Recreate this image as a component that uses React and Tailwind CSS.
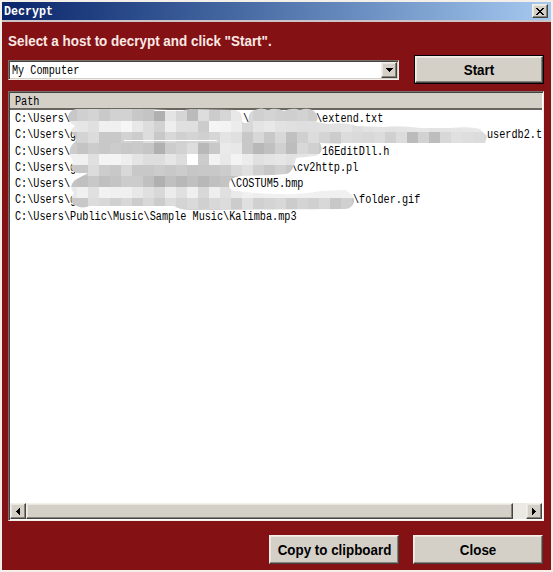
const MONO = "font-['Liberation_Mono','Noto_Sans_CJK_SC',monospace]";
const raised =
  'border border-t-[#f2efe9] border-l-[#f2efe9] border-r-[#45423f] border-b-[#45423f] shadow-[inset_-1px_-1px_0_#86837d,inset_1px_1px_0_#e9e6e0] bg-[#d4d0c8]';

// Fixed-pitch text, condensed to a six pixel cell.
function Mono({ children, className = '' }) {
  return (
    <span className={`inline-block origin-left scale-x-[0.85] whitespace-pre text-[12px] leading-4 text-black ${MONO} ${className}`}>
      {children}
    </span>
  );
}

const rows = [
  { path: 'C:\\Users\\', parts: [['left-[233px]', '\\'], ['left-[306px]', '\\extend.txt']] },
  { path: 'C:\\Users\\g', parts: [['left-[477px]', 'userdb2.txt']] },
  { path: 'C:\\Users\\', parts: [['left-[312px]', '16EditDll.h']] },
  { path: 'C:\\Users\\g', parts: [['left-[281px]', '\\cv2http.pl']] },
  { path: 'C:\\Users\\', parts: [['left-[220px]', '\\COSTUM5.bmp']] },
  { path: 'C:\\Users\\g', parts: [['left-[343px]', '\\folder.gif']] },
  { path: 'C:\\Users\\Public\\Music\\Sample Music\\Kalimba.mp3', parts: [] },
];

// Grey level of each redaction tile, two hex digits per tile.
const tiles = [
  'c8d0d4c9d2d2c8c4b0e4d5bbddccd6e8d8d0d4d0cfd2cdd0d0',
  'e8e6e0f0f0f6e8ddd2eee0dfccf5f3ecd8e4e8e2e0dedfe0e2e5dee2e4e2e4e6e6e3e4e5e6e8e8',
  'c8d4dcc8c8d2ccddc8d8d0d4d0d6e4e0c8d8c8d8c0d0dcd4ccdcdad8dcd0dcbbd2bdd8e0dedcd8',
  'ccc4ccc8ccc8cac6b0ccd2ddb8c8eae8c8b8c0d0bdd8d0c8d0',
  'f0f0e0f4f4eee4dddde6ddffccf2e8f3ece0e4e6e2e4e8e4e2',
  'c8c8dcccc8d8c8c8ccc8ccc6c8c8ccd8e0d0c8d0c8c8d0c8cc',
  'c4c0c8c0c4ccccc0b0c0b8c0b8c0c4c0c4c4c4c4c4c4c4c4c4',
  'e8f0e0f2f0f0e8e0d8ece0f0d8eee0eaf0eef0f0f2f0f0f0f0f0f0',
  'c8c8dcd8d0d8ccd8ccdcd4dad0d8dccce0d0d4d8ccd4d0d8c8d0c8',
  'd0d0d0d0d0d0d0d0d0d0d0d0d0c8d0c4d0d8c8d0c8d0c8d0d0',
];

function Redaction() {
  return (
    <svg className="pointer-events-none absolute left-[57px] top-[16px]" width="424" height="104" viewBox="66 108 424 104" shapeRendering="crispEdges">
      <defs>
        <clipPath id="brush">
          <path d="M76 109 L155 109 180 111 190 109 235 110 Q242 112 242 118 Q241 125 249 122 Q247 112 255 110 Q261 107 268 110 Q276 107 284 111 Q293 107 300 110 Q308 107 314 111 Q320 118 316 122 L328 124 Q346 122 356 126 L385 127 Q400 125 420 128 L450 128 Q470 126 480 129 L487 136 485 143 367 143 355 144 320 143 Q325 153 315 156 L296 158 Q293 173 286 174 L273 175 240 176 Q228 178 229 185 Q229 191 237 191 L256 193 Q300 196 320 191 L345 190 Q355 195 354 202 Q352 209 345 209 L190 210 Q180 210 174 206 L90 206 Q80 210 72 203 Q70 197 74 193 Q68 187 75 180 L88 173 82 173 Q72 174 71 167 Q75 161 70 156 Q68 147 75 142 Q79 138 72 134 Q70 129 75 126 Q68 122 68 116 Q70 110 76 109 Z" />
        </clipPath>
      </defs>
      <g clipPath="url(#brush)">
        {tiles.map((line, r) =>
          line.match(/../g).map((v, c) => (
            <rect key={`${r}-${c}`} x={66 + c * 11} y={r === 0 ? 108 : 110 + r * 11} width="11" height={r === 0 ? 13 : 11} fill={`#${v}${v}${v}`} />
          ))
        )}
        <path d="M124 140.5h93" stroke="#fff" strokeWidth="1" />
        <path d="M154 110.5h30" stroke="#fff" strokeWidth="1" />
      </g>
    </svg>
  );
}

function PushButton({ children, className = '' }) {
  return (
    <button className={`flex items-center justify-center whitespace-nowrap font-['Liberation_Sans',sans-serif] text-[14px] font-bold leading-none text-black ${raised} ${className}`}>
      <span className="inline-block scale-x-[0.955]">{children}</span>
    </button>
  );
}

export default function App() {
  return (
    <div className="h-[572px] w-[553px] overflow-hidden bg-[#f5efe9] pl-[2px] pt-[2px]">
      <div className="flex h-[568px] w-[549px] flex-col bg-[#841113]">
        <header className="flex h-[20px] shrink-0 items-center justify-between border-b-2 border-[#cdc4c8] bg-gradient-to-r from-[#0a246a] to-[#a6caf0] pl-[2px] pr-[3px]">
          <span className={`mt-px inline-block origin-left scale-x-[0.97] text-[12px] font-bold leading-4 text-white ${MONO}`}>Decrypt</span>
          <button aria-label="Close window" className={`flex h-[14px] w-[16px] items-center justify-center ${raised}`}>
            <svg width="8" height="7" viewBox="0 0 8 7" shapeRendering="crispEdges">
              <path d="M0 0h2v1h1v1h2V1h1V0h2v1H7v1H6v1H5v1h1v1h1v1h1v1H6V6H5V5H3v1H2v1H0V6h1V5h1V4h1V3H2V2H1V1H0z" />
            </svg>
          </button>
        </header>

        <main className="flex flex-1 flex-col pl-[6px] pr-[7px]">
          <h1 className="mt-[11px] h-[16px] origin-left scale-x-[0.96] whitespace-nowrap font-['Liberation_Sans',sans-serif] text-[14px] font-bold leading-4 text-[#fbe9e6]">
            Select a host to decrypt and click "Start".
          </h1>

          <div className="mt-[6px] flex h-[29px] items-start justify-between">
            <div className="mt-[5px] flex h-[20px] w-[391px] justify-between border border-b-[#f4eeea] border-l-[#77706c] border-r-[#f4eeea] border-t-[#77706c] bg-white shadow-[inset_1px_1px_0_#45423f,inset_-1px_-1px_0_#d4d0c8]">
              <Mono className="ml-[3px] mt-[2px]">My Computer</Mono>
              <span className={`mr-px mt-px flex h-[16px] w-[16px] items-center justify-center ${raised}`}>
                <svg width="7" height="4" viewBox="0 0 7 4" shapeRendering="crispEdges"><path d="M0 0h7v1H6v1H5v1H4v1H3V3H2V2H1V1H0z" /></svg>
              </span>
            </div>
            <div className="h-[29px] w-[130px] bg-black p-px">
              <PushButton className="h-full w-full">Start</PushButton>
            </div>
          </div>

          <section className="relative mt-[7px] flex h-[430px] w-[536px] flex-col border border-b-[#f4eeea] border-l-[#77706c] border-r-[#f4eeea] border-t-[#77706c] bg-white p-px shadow-[inset_1px_1px_0_#45423f]">
            <div className="flex h-[17px] shrink-0 items-center border-b-2 border-[#696660] bg-[#d4d0c8] pl-[5px]">
              <Mono className="mt-[3px]">Path</Mono>
            </div>
            <div className="flex-1 overflow-hidden pt-[1px]">
              {rows.map((row, i) => (
                <div key={i} className="relative h-[16.3px] pl-[5px] leading-4">
                  <Mono className="align-top">{row.path}</Mono>
                  {row.parts.map(([pos, text]) => (
                    <Mono key={text} className={`absolute top-0 ${pos}`}>{text}</Mono>
                  ))}
                </div>
              ))}
            </div>
            <Redaction />
            <div className="flex h-[16px] shrink-0 bg-[#ebe9e4]">
              <span className={`flex h-[16px] w-[16px] items-center justify-center ${raised}`}>
                <svg width="4" height="7" viewBox="0 0 4 7" shapeRendering="crispEdges"><path d="M4 0v7H3V6H2V5H1V4H0V3h1V2h1V1h1V0z" /></svg>
              </span>
              <span className={`h-[16px] w-[487px] ${raised}`} />
              <span className={`ml-auto flex h-[16px] w-[16px] items-center justify-center ${raised}`}>
                <svg width="4" height="7" viewBox="0 0 4 7" shapeRendering="crispEdges"><path d="M0 0v7h1V6h1V5h1V4h1V3H3V2H2V1H1V0z" /></svg>
              </span>
            </div>
          </section>

          <footer className="mr-px mt-[14px] flex justify-end gap-[14px]">
            <PushButton className="h-[29px] w-[130px]">Copy to clipboard</PushButton>
            <PushButton className="h-[29px] w-[130px]">Close</PushButton>
          </footer>
        </main>
      </div>
    </div>
  );
}
